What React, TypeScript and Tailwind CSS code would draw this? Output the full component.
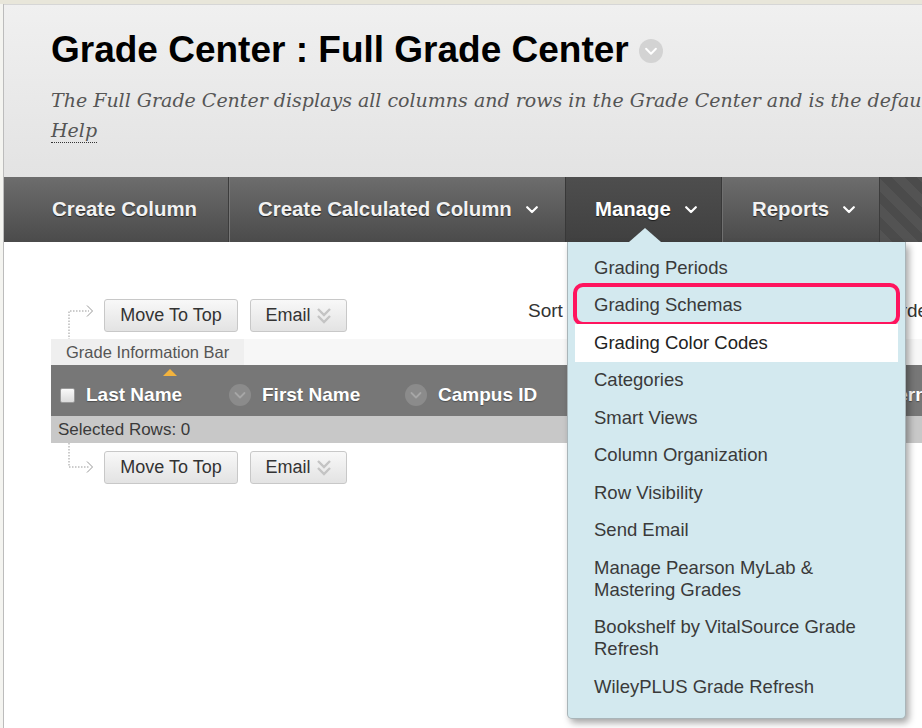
import React from 'react';

const menuItems = [
  { label: 'Grading Periods' },
  { label: 'Grading Schemas', marked: true },
  { label: 'Grading Color Codes', hover: true },
  { label: 'Categories' },
  { label: 'Smart Views' },
  { label: 'Column Organization' },
  { label: 'Row Visibility' },
  { label: 'Send Email' },
  { label: 'Manage Pearson MyLab &\nMastering Grades' },
  { label: 'Bookshelf by VitalSource Grade\nRefresh' },
  { label: 'WileyPLUS Grade Refresh' },
];

function Chevron({ className = '', color = '#fff', w = 12, h = 8, sw = 2.2 }) {
  return (
    <svg width={w} height={h} viewBox="0 0 12 8" className={className}>
      <path d="M1.2 1.2 L6 6 L10.8 1.2" fill="none" stroke={color} strokeWidth={sw} strokeLinecap="round" strokeLinejoin="round" />
    </svg>
  );
}

function CircleChevron({ size = 22, bg, fg }: { size?: number; bg: string; fg: string }) {
  return (
    <svg width={size} height={size} viewBox="0 0 22 22" className="shrink-0">
      <circle cx="11" cy="11" r="11" fill={bg} />
      <path d="M6.5 9 L11 13.5 L15.5 9" fill="none" stroke={fg} strokeWidth="1.8" strokeLinecap="round" strokeLinejoin="round" />
    </svg>
  );
}

function DoubleChevron() {
  return (
    <svg width="16" height="18" viewBox="0 0 16 18" className="ml-[5px]">
      <path d="M2 2 L8 8 L14 2" fill="none" stroke="#c4c4c4" strokeWidth="2.4" />
      <path d="M2 9 L8 15 L14 9" fill="none" stroke="#c4c4c4" strokeWidth="2.4" />
    </svg>
  );
}

function Connector({ up }: { up: boolean }) {
  // dotted elbow line with open arrowhead
  return (
    <svg width="53" height="33" viewBox="0 0 53 33" className="shrink-0 overflow-visible">
      {up ? (
        <path d="M18 41 L18 12 L38 12" fill="none" stroke="#999" strokeWidth="1" strokeDasharray="1.5 1.5" />
      ) : (
        <path d="M18 -8 L18 16 L38 16" fill="none" stroke="#999" strokeWidth="1" strokeDasharray="1.5 1.5" />
      )}
      <path d={up ? 'M36 6.5 L41.5 12 L36 17.5' : 'M36 10.5 L41.5 16 L36 21.5'} fill="none" stroke="#999" strokeWidth="1" />
    </svg>
  );
}

function Toolbar({ up }: { up: boolean }) {
  return (
    <div className="flex shrink-0 items-start">
      <Connector up={up} />
      <button className="h-[33px] w-[134px] shrink-0 rounded-[3px] border border-[#c8c8c8] bg-gradient-to-b from-[#f8f8f8] to-[#e3e3e3] text-[18px] text-[#333]">
        Move To Top
      </button>
      <button className="ml-[12px] flex h-[33px] w-[97px] shrink-0 items-center justify-center rounded-[3px] border border-[#c8c8c8] bg-gradient-to-b from-[#f8f8f8] to-[#e3e3e3] text-[18px] text-[#333]">
        Email
        <DoubleChevron />
      </button>
    </div>
  );
}

export default function App() {
  return (
    <div className="relative h-[728px] w-[922px] overflow-hidden bg-[#f4f4f0] font-['Liberation_Sans',Arial,sans-serif]">
      {/* top strip */}
      <div className="h-[4px] bg-[#e8e6da]" />

      <div className="ml-[3px] h-[724px] border-l border-[#bcbcbc] bg-white">
        {/* Header */}
        <div className="h-[173px] overflow-hidden border-t border-[#d6d6d6] bg-gradient-to-b from-[#f0f0f0] to-[#e3e3e3] pl-[47px] pt-[23px]">
          <div className="flex items-center">
            <h1 className="whitespace-nowrap text-[37px] font-bold leading-[43px] text-black">
              Grade Center : Full Grade Center
            </h1>
            <span className="ml-[10px] mt-[2px]">
              <CircleChevron size={24} bg="#d3d3d3" fg="#ffffff" />
            </span>
          </div>
          <p className="mt-[14px] whitespace-nowrap font-['DejaVu_Serif',serif] text-[19px] italic leading-[30px] text-[#555]">
            The Full Grade Center displays all columns and rows in the Grade Center and is the default view of the Grade Center.
          </p>
          <p className="font-['DejaVu_Serif',serif] text-[19px] italic leading-[30px] text-[#555]">
            <span className="border-b border-dotted border-[#333] pb-[1px]">Help</span>
          </p>
        </div>

        {/* Action bar */}
        <div className="flex h-[65px] bg-gradient-to-b from-[#6d6d6d] to-[#4b4b4b] text-[20.4px] font-bold text-[#f2f2f2] [text-shadow:0_1px_1px_rgba(0,0,0,0.6)]">
          <div className="flex w-[224px] items-center pl-[48px]">Create Column</div>
          <div className="flex w-[337px] items-center border-l border-[#3c3c3c] pl-[29px] shadow-[inset_1px_0_0_#777]">
            Create Calculated Column
            <Chevron className="ml-[14px]" />
          </div>
          <div className="relative flex w-[156px] items-center border-l border-[#383838] bg-gradient-to-b from-[#4e4e4e] to-[#404040] pl-[29px] text-white">
            Manage
            <Chevron className="ml-[14px]" />
          </div>
          <div className="flex w-[158px] items-center border-l border-[#383838] pl-[30px] shadow-[inset_1px_0_0_#707070]">
            Reports
            <Chevron className="ml-[14px]" />
          </div>
          <div className="flex-1 border-l border-[#3c3c3c] bg-[repeating-linear-gradient(45deg,#535353_0,#535353_9px,#4b4b4b_9px,#4b4b4b_18px)]" />
        </div>

        {/* Body */}
        <div className="overflow-hidden pl-[47px] pt-[57px]">
          <div className="flex items-start">
            <Toolbar up={true} />
            <span className="ml-[181px] mt-[-2px] shrink-0 text-[19px] text-[#333]">Sort</span>
            <span className="ml-[323px] mt-[-2px] shrink-0 whitespace-nowrap text-[19px] text-[#333]">Order</span>
          </div>

          <div className="mt-[7px] flex h-[26px] bg-[#f7f7f7]">
            <div className="w-[193px] bg-[#efefef] pl-[15px] text-[16.5px] leading-[26px] text-[#555]">
              Grade Information Bar
            </div>
          </div>

          <div className="relative flex h-[51px] items-center bg-[#777777] pt-[9px] text-[19px] font-bold text-white [text-shadow:0_1px_1px_rgba(0,0,0,0.35)]">
            <div className="absolute left-[112px] top-[4px] h-0 w-0 border-x-[7px] border-b-[7px] border-x-transparent border-b-[#f3b33d]" />
            <div className="flex w-[178px] shrink-0 items-center whitespace-nowrap pl-[9px]">
              <span className="mr-[11px] h-[15px] w-[15px] shrink-0 rounded-[2px] border border-[#999] bg-gradient-to-b from-[#fafafa] to-[#dcdcdc]" />
              Last Name
            </div>
            {['First Name', 'Campus ID', 'Last Access', 'Username'].map((c, i) => (
              <div key={c} className={`flex shrink-0 items-center whitespace-nowrap ${i === 3 ? 'ml-[83px]' : 'w-[176px]'}`}>
                <CircleChevron bg="#8b8b8b" fg="#a6a6a6" />
                <span className="ml-[11px]">{c}</span>
              </div>
            ))}
          </div>

          <div className="h-[27px] bg-[#c8c8c8] pl-[7px] text-[17px] leading-[27px] text-[#3a3a3a]">
            Selected Rows: 0
          </div>

          <div className="mt-[8px] flex">
            <Toolbar up={false} />
          </div>
        </div>
      </div>

      {/* Manage dropdown */}
      <div className="absolute left-[567px] top-[242px] w-[339px] rounded-b-[5px] border border-t-0 border-[#a9b5b9] bg-[#d3e9ef] pb-[12px] pt-[7px] shadow-[3px_4px_7px_rgba(0,0,0,0.35)]">
        <div className="absolute left-[61px] top-[-14px] h-0 w-0 border-x-[16px] border-b-[14px] border-x-transparent border-b-[#d3e9ef]" />
        {menuItems.map((item) => (
          <div
            key={item.label}
            className={`relative mx-[7px] whitespace-pre-line py-[7.75px] pl-[19px] text-[18.5px] leading-[22px] ${
              item.hover ? 'bg-white text-[#222]' : 'text-[#3a3a3a]'
            }`}
          >
            {item.label}
            {item.marked && (
              <div className="absolute inset-x-[-2px] bottom-[-2px] top-[-4px] rounded-[10px] border-[4px] border-[#ff145e]" />
            )}
          </div>
        ))}
      </div>
    </div>
  );
}
